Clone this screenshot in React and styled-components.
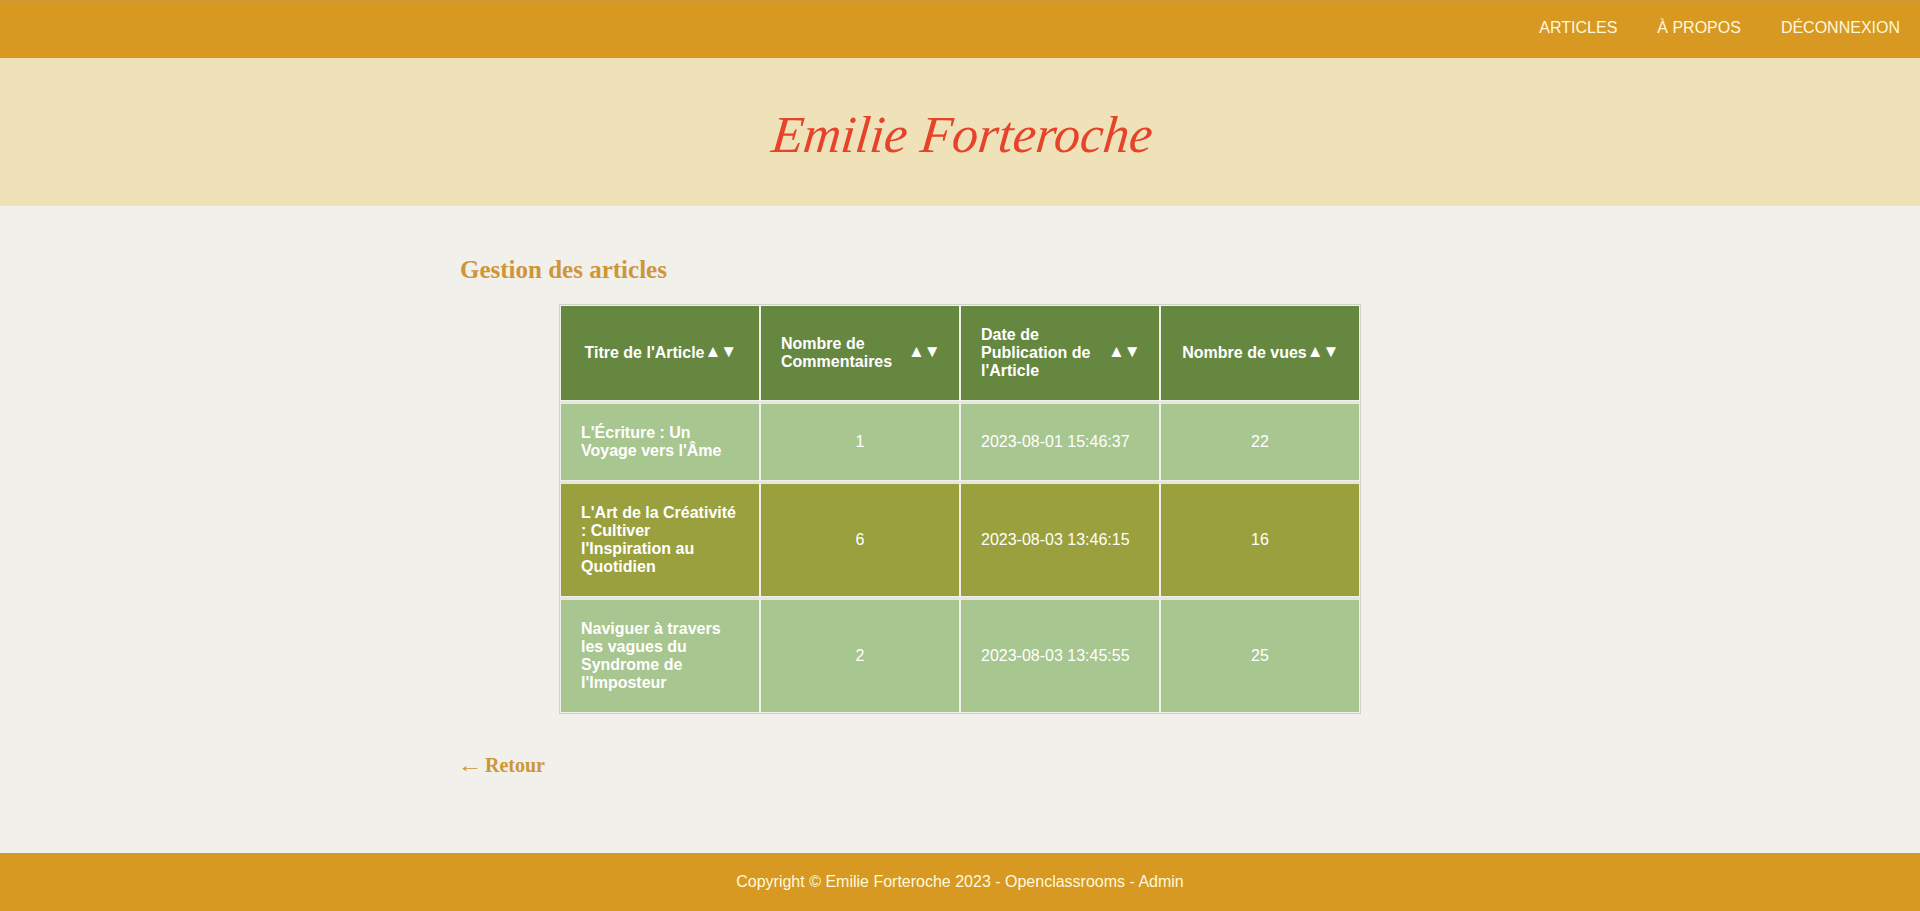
import React from "react";
import styled, { createGlobalStyle } from "styled-components";

const Global = createGlobalStyle`
  html, body { margin: 0; padding: 0; }
  body { background: #f2f0eb; font-family: "Liberation Sans", Arial, sans-serif; color: #fff; }
`;

const Page = styled.div`
  min-height: 911px;
  display: flex;
  flex-direction: column;
`;

const Nav = styled.nav`
  height: 58px;
  box-sizing: border-box;
  border-top: 1px solid #cf9638;
  background: #d79921;
  display: flex;
  justify-content: flex-end;
  align-items: center;
  gap: 40px;
  padding: 0 20px 3px 0;
`;

const NavLink = styled.a`
  color: #fff8dc;
  font-size: 16px;
  text-decoration: none;
`;

const Banner = styled.header`
  height: 148px;
  background: #efe2b9;
  display: flex;
  justify-content: center;
  align-items: center;
`;

const Logo = styled.h1`
  margin: 0;
  color: #e5432a;
  font-family: "Liberation Serif", serif;
  font-style: italic;
  font-weight: 400;
  font-size: 52px;
  line-height: 1;
  transform: translate(2px, 3px) skewX(-6deg);
`;

const Main = styled.main`
  flex: 1;
  width: 1000px;
  margin: 0 auto;
  box-sizing: border-box;
  padding-top: 50px;
`;

const Title = styled.h2`
  margin: 0 0 20px;
  font-family: "Liberation Serif", serif;
  font-size: 25px;
  line-height: 28px;
  color: #cf9638;
`;

const Table = styled.table`
  width: 802px;
  margin: 0 auto;
  table-layout: fixed;
  border-collapse: separate;
  border-spacing: 0;
  border: 1px solid #cfd2c8;
`;

const HeadCell = styled.th`
  padding: 0;
  height: 94px;
  background: #66873f;
  border: 1px solid #f2f0eb;
  font-size: 16px;
  font-weight: 700;
  line-height: 18px;
  text-align: left;
`;

const HeadInner = styled.div`
  display: flex;
  align-items: center;
  justify-content: center;
  padding: 0 20px;
`;

const Arrows = styled.span`
  flex: none;
  width: 31px;
  font-size: 17px;
  letter-spacing: -1px;
  white-space: nowrap;
  line-height: 18px;
  position: relative;
  top: -1px;
`;

const Cell = styled.td`
  padding: 20px;
  background: ${(p) => (p.$olive ? "#9aa03e" : "#a8c68f")};
  border: 1px solid #f2f0eb;
  border-top: 3px solid #e6e7df;
  font-size: 16px;
  line-height: 18px;
  text-align: ${(p) => (p.$align === "left" ? "left" : "center")};
  font-weight: ${(p) => (p.$bold ? 700 : 400)};
`;

const Back = styled.a`
  display: block;
  margin-top: 40px;
  font-family: "Liberation Serif", serif;
  font-size: 20px;
  font-weight: 700;
  color: #cf9638;
  text-decoration: none;
`;

const BackArrow = styled.span`
  display: inline-block;
  font-weight: 400;
  transform: scaleX(1.25);
`;

const Footer = styled.footer`
  height: 58px;
  box-sizing: border-box;
  padding-bottom: 1px;
  background: #d79921;
  display: flex;
  align-items: center;
  justify-content: center;
  font-size: 16px;
  color: #fff8dc;
`;

const heads = ["Titre de l'Article", "Nombre de Commentaires", "Date de Publication de l'Article", "Nombre de vues"];
const rows = [
  ["L'Écriture : Un Voyage vers l'Âme", "1", "2023-08-01 15:46:37", "22"],
  ["L'Art de la Créativité : Cultiver l'Inspiration au Quotidien", "6", "2023-08-03 13:46:15", "16"],
  ["Naviguer à travers les vagues du Syndrome de l'Imposteur", "2", "2023-08-03 13:45:55", "25"],
];

export default function App() {
  return (
    <Page>
      <Global />
      <Nav>
        <NavLink>ARTICLES</NavLink>
        <NavLink>À PROPOS</NavLink>
        <NavLink>DÉCONNEXION</NavLink>
      </Nav>
      <Banner>
        <Logo>Emilie Forteroche</Logo>
      </Banner>
      <Main>
        <Title>Gestion des articles</Title>
        <Table>
          <thead>
            <tr>
              {heads.map((h) => (
                <HeadCell key={h}>
                  <HeadInner>
                    <span>{h}</span>
                    <Arrows>▲▼</Arrows>
                  </HeadInner>
                </HeadCell>
              ))}
            </tr>
          </thead>
          <tbody>
            {rows.map((r, i) => (
              <tr key={r[0]}>
                <Cell $bold $align="left" $olive={i === 1}>{r[0]}</Cell>
                <Cell $olive={i === 1}>{r[1]}</Cell>
                <Cell $align="left" $olive={i === 1}>{r[2]}</Cell>
                <Cell $olive={i === 1}>{r[3]}</Cell>
              </tr>
            ))}
          </tbody>
        </Table>
        <Back><BackArrow>←</BackArrow> Retour</Back>
      </Main>
      <Footer>Copyright © Emilie Forteroche 2023 - Openclassrooms - Admin</Footer>
    </Page>
  );
}
